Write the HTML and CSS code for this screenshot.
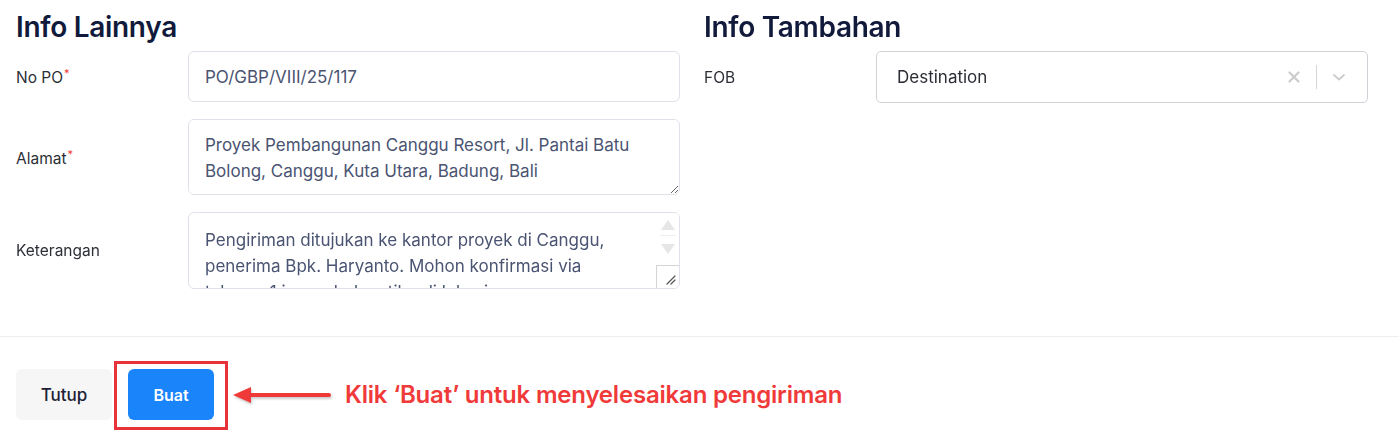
FILE: index.html
```html
<!DOCTYPE html>
<html lang="id">
<head>
    <meta charset="UTF-8">
    <meta name="viewport" content="width=device-width, initial-scale=1.0">
    <title>Buat Pengiriman</title>
    <link rel="stylesheet" href="styles.css">
</head>
<body>
    <div class="form-body">
        <section class="column">
            <h2 class="section-title">Info Lainnya</h2>

            <div class="field">
                <label class="field-label">No PO<span class="required">*</span></label>
                <input type="text" class="text-input" value="PO/GBP/VIII/25/117">
            </div>

            <div class="field">
                <label class="field-label">Alamat<span class="required">*</span></label>
                <textarea class="text-area" rows="2" spellcheck="false">Proyek Pembangunan Canggu Resort, Jl. Pantai Batu Bolong, Canggu, Kuta Utara, Badung, Bali</textarea>
            </div>

            <div class="field">
                <label class="field-label">Keterangan</label>
                <div class="scroll-box">
                    <textarea class="text-area scroll" rows="2" spellcheck="false">Pengiriman ditujukan ke kantor proyek di Canggu, penerima Bpk. Haryanto. Mohon konfirmasi via telepon 1 jam sebelum tiba di lokasi.</textarea>
                    <!-- scrollbar drawn by hand, the headless browser hides the real one -->
                    <div class="fake-scrollbar">
                        <span class="sb-arrow up"></span>
                        <span class="sb-arrow down"></span>
                        <span class="sb-corner">
                            <svg width="12" height="12" viewBox="0 0 12 12">
                                <path d="M11 3 L3 11 M11 7 L7 11" stroke="#555" stroke-width="1.2" stroke-linecap="round"/>
                            </svg>
                        </span>
                    </div>
                </div>
            </div>
        </section>

        <section class="column">
            <h2 class="section-title">Info Tambahan</h2>

            <div class="field">
                <label class="field-label">FOB</label>
                <div class="select">
                    <span class="select-value">Destination</span>
                    <div class="select-indicators">
                        <svg class="indicator" width="20" height="20" viewBox="0 0 20 20">
                            <path d="M5.5 5.5 L14.5 14.5 M14.5 5.5 L5.5 14.5" stroke="#cccccc" stroke-width="2.2" stroke-linecap="round"/>
                        </svg>
                        <span class="indicator-sep"></span>
                        <svg class="indicator" width="20" height="20" viewBox="0 0 20 20">
                            <path d="M5 8 L10 12.5 L15 8" stroke="#cccccc" stroke-width="1.8" fill="none" stroke-linecap="round" stroke-linejoin="round"/>
                        </svg>
                    </div>
                </div>
            </div>
        </section>
    </div>

    <footer class="form-footer">
        <button class="btn btn-light">Tutup</button>
        <button class="btn btn-primary highlight">Buat</button>
        <div class="hint">
            <svg class="hint-arrow" width="100" height="24" viewBox="0 0 100 24">
                <path d="M14 12 H97" stroke="#f03a3a" stroke-width="4" stroke-linecap="round"/>
                <path d="M1 12 L19 4 L19 20 Z" fill="#f03a3a"/>
            </svg>
            <span class="hint-text">Klik ‘Buat’ untuk menyelesaikan pengiriman</span>
        </div>
    </footer>
</body>
</html>
```

FILE: styles.css
```css
* {
    margin: 0;
    padding: 0;
    box-sizing: border-box;
    font-family: Inter, 'Noto Sans', sans-serif;
}

:root {
    --title: #111a3b;
    --label: #2c2f36;
    --value: #4a5472;
    --border: #dfe1e8;
    --primary: #1a84fb;
    --red: #f03a3a;
}

body {
    background: #ffffff;
    color: var(--label);
    width: 1399px;
    height: 441px;
    overflow: hidden;
}

.form-body {
    display: grid;
    grid-template-columns: 664px 664px;
    gap: 24px;
    padding: 9px 16px 0;
    height: 336px;
}

.section-title {
    font-size: 28px;
    font-weight: 600;
    color: var(--title);
    letter-spacing: -0.3px;
    line-height: 36px;
    margin-bottom: 6px;
}

.field {
    display: grid;
    grid-template-columns: 172px 1fr;
    align-items: center;
    margin-bottom: 17px;
}

.field-label {
    font-size: 15.5px;
    color: var(--label);
}

.required {
    color: var(--red);
    font-size: 11px;
    vertical-align: 6px;
    margin-left: 1px;
}

.text-input,
.text-area {
    width: 100%;
    border: 1px solid var(--border);
    border-radius: 6px;
    font-size: 17px;
    color: var(--value);
    background: #fff;
    outline: none;
}

.text-input {
    height: 51px;
    padding: 0 16px;
}

.text-area {
    height: 76px;
    padding: 12px 16px;
    line-height: 26px;
    resize: vertical;
    display: block;
}

.scroll-box {
    position: relative;
}

.text-area.scroll {
    height: 77px;
    padding: 14px 39px 0 16px;
    overflow: hidden;
    resize: none;
}

.fake-scrollbar {
    position: absolute;
    top: 1px;
    right: 1px;
    bottom: 1px;
    width: 23px;
    display: flex;
    flex-direction: column;
    align-items: center;
    border-top-right-radius: 5px;
    border-bottom-right-radius: 5px;
    background: #fff;
}

.sb-arrow {
    width: 0;
    height: 0;
    border-left: 7px solid transparent;
    border-right: 7px solid transparent;
}

.sb-arrow.up {
    margin-top: 7px;
    border-bottom: 10px solid #e6e6e6;
}

.sb-arrow.down {
    margin-top: 14px;
    border-top: 10px solid #e6e6e6;
    position: relative;
}

.sb-arrow.down::before {
    content: '';
    position: absolute;
    left: -8px;
    top: -19px;
    width: 16px;
    height: 1px;
    background: #eeeeee;
}

.sb-corner {
    margin-top: auto;
    align-self: stretch;
    height: 23px;
    border-top: 1px solid #d4d4d4;
    border-left: 1px solid #d4d4d4;
    display: flex;
    align-items: flex-end;
    justify-content: flex-end;
    padding: 0 3px 3px 0;
}

.select {
    height: 52px;
    border: 1px solid #cfd1d6;
    border-radius: 5px;
    display: flex;
    align-items: center;
    padding: 0 16px 0 20px;
}

.select-value {
    flex: 1;
    font-size: 17px;
    color: #2a2d33;
}

.select-indicators {
    display: flex;
    align-items: center;
    gap: 6px;
}

.indicator {
    margin: 0 2px;
}

.indicator-sep {
    width: 1px;
    height: 24px;
    background: #d6d6d6;
    margin: 0 4px;
}

.form-footer {
    border-top: 1px solid #eceef1;
    display: flex;
    align-items: center;
    gap: 16px;
    padding: 32px 16px 0;
}

.btn {
    height: 51px;
    border: none;
    border-radius: 6px;
    font-size: 17px;
    font-weight: 500;
    cursor: pointer;
}

.btn-light {
    width: 96px;
    background: #f6f6f7;
    color: #1c2136;
}

.btn-primary {
    width: 86px;
    background: var(--primary);
    color: #fff;
    font-weight: 600;
    font-size: 16px;
}

.highlight {
    position: relative;
}

.highlight::after {
    content: '';
    position: absolute;
    top: -8px;
    bottom: -10px;
    left: -14px;
    right: -14px;
    border: 3px solid #e8323a;
}

.hint {
    display: flex;
    align-items: center;
    margin-left: 2px;
}

.hint-arrow {
    filter: drop-shadow(1px 2px 1px rgba(0, 0, 0, 0.2));
}

.hint-text {
    margin-left: 13px;
    font-size: 24px;
    font-weight: 600;
    color: var(--red);
    letter-spacing: -0.2px;
}
```
